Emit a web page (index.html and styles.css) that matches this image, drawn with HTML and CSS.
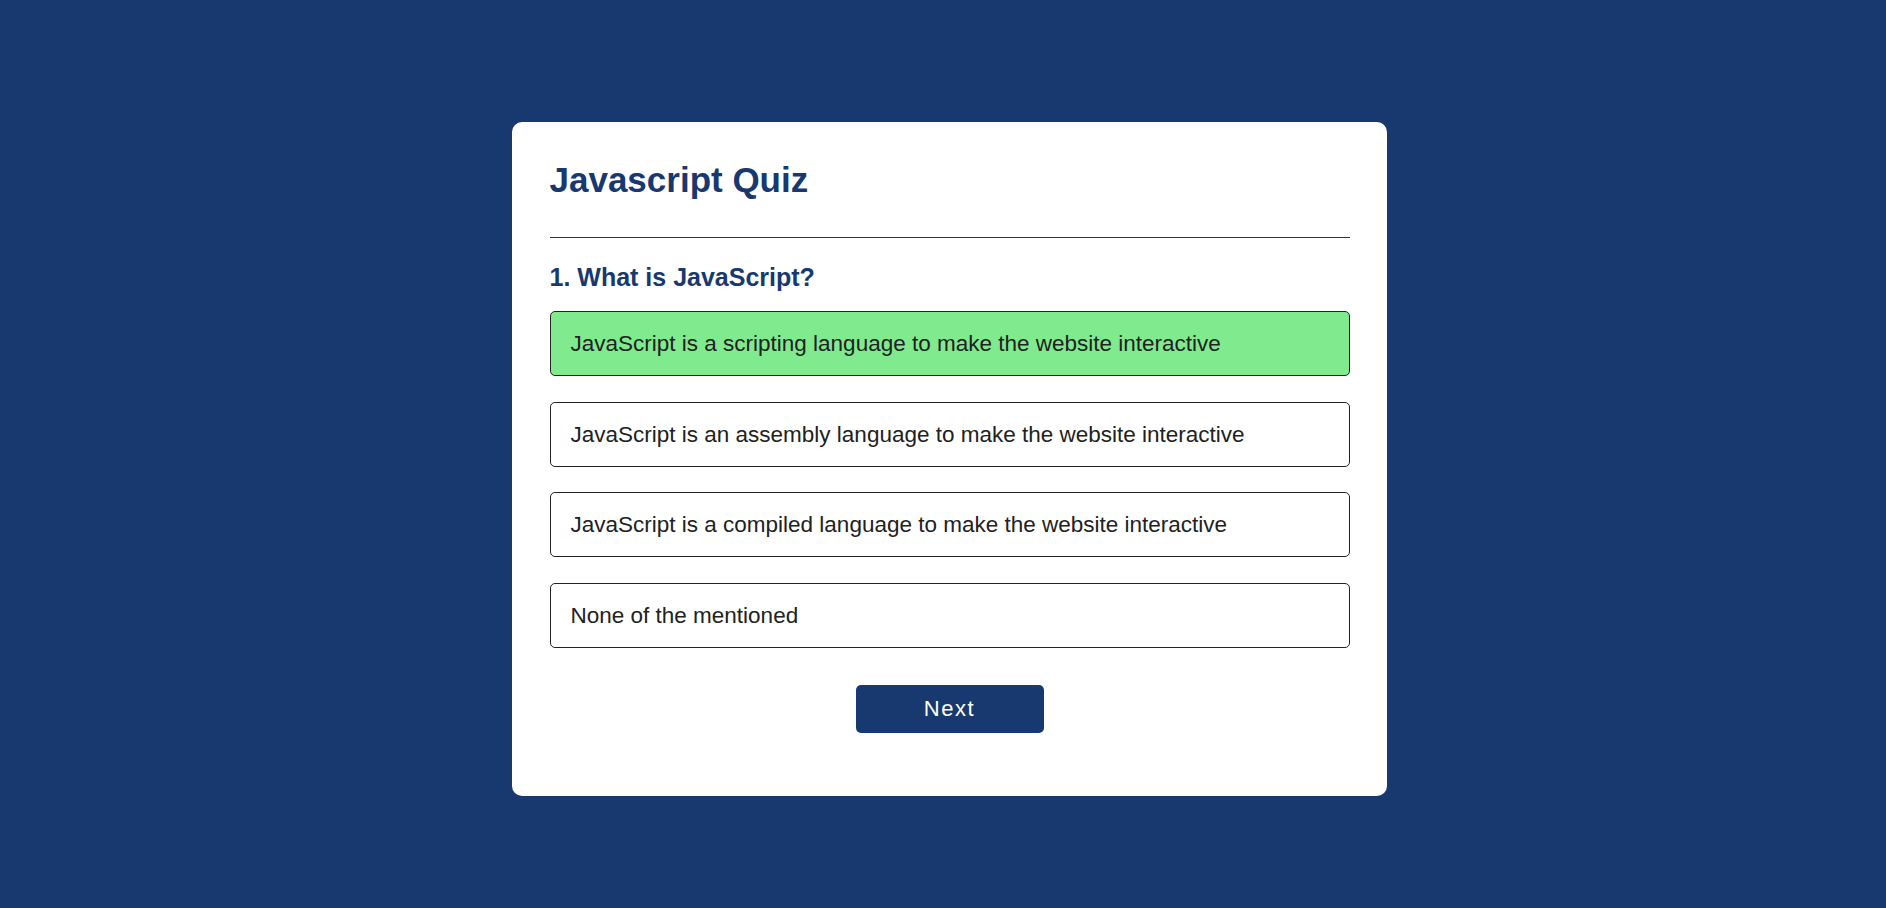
FILE: index.html
```html
<!DOCTYPE html>
<html lang="en">
<head>
<meta charset="utf-8">
<title>Javascript Quiz</title>
<link rel="stylesheet" href="styles.css">
</head>
<body>
<div class="app">
  <h1 class="title">Javascript Quiz</h1>
  <div class="quiz">
    <h2 class="question">1. What is JavaScript?</h2>
    <div class="answers">
      <button class="btn correct">JavaScript is a scripting language to make the website interactive</button>
      <button class="btn">JavaScript is an assembly language to make the website interactive</button>
      <button class="btn">JavaScript is a compiled language to make the website interactive</button>
      <button class="btn">None of the mentioned</button>
    </div>
    <button class="next-btn">Next</button>
  </div>
</div>
</body>
</html>
```
FILE: styles.css
```css
* {
  margin: 0;
  padding: 0;
  box-sizing: border-box;
}
html {
  background: #173970;
}
body {
  background: #173970;
  font-family: "Liberation Sans", Arial, sans-serif;
  padding: 122px 0 0 13px;
}
.app {
  width: 875px;
  margin: 0 auto;
  background: #fff;
  border-radius: 10px;
  padding: 38px 37.5px 38px 37.5px;
}
.title {
  font-size: 35px;
  font-weight: 700;
  color: #173970;
  line-height: 40px;
  padding-bottom: 37px;
  border-bottom: 1px solid #333;
}
.quiz {
  padding-top: 25px;
}
.question {
  font-size: 25px;
  font-weight: 700;
  color: #173970;
  line-height: 29px;
}
.answers {
  margin-top: 19px;
  display: flex;
  flex-direction: column;
  gap: 25.5px;
}
.btn {
  display: block;
  width: 100%;
  background: #fff;
  color: #222;
  font-family: "Liberation Sans", Arial, sans-serif;
  font-size: 22.5px;
  line-height: 25px;
  font-weight: 400;
  text-align: left;
  padding: 19px 20px;
  border: 1px solid #222;
  border-radius: 5px;
  cursor: pointer;
}
.btn.correct {
  background: #80ea8e;
}
.next-btn {
  display: block;
  margin: 37px auto 25px;
  width: 188px;
  height: 48px;
  background: #173970;
  color: #fff;
  border: none;
  border-radius: 5px;
  font-family: "Liberation Sans", Arial, sans-serif;
  font-size: 22px;
  letter-spacing: 1.6px;
  cursor: pointer;
}
```
